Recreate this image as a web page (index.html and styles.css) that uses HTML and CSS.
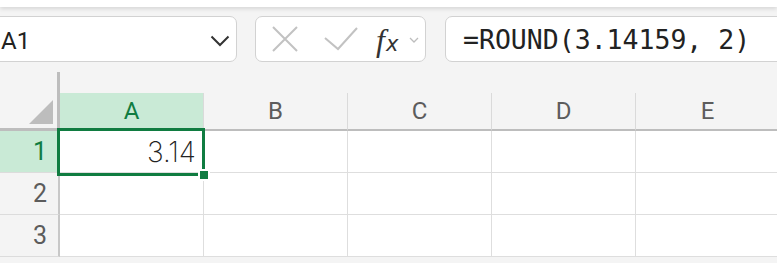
FILE: index.html
```html
<!DOCTYPE html>
<html lang="en">
<head>
    <meta charset="UTF-8">
    <title>Hoja de cálculo</title>
    <link rel="stylesheet" href="styles.css">
</head>
<body>
    <!-- Franja blanca superior -->
    <div class="topbar"></div>

    <!-- Barra de fórmulas -->
    <div class="toolbar">
        <div class="namebox">
            <span>A1</span>
            <svg class="chev" width="20" height="12" viewBox="0 0 20 12">
                <polyline points="1.5,1.5 10,10 18.5,1.5" fill="none" stroke="#333" stroke-width="2"/>
            </svg>
        </div>
        <div class="fxbox">
            <svg class="icon-x" width="26" height="26" viewBox="0 0 26 26">
                <path d="M1 1 L25 25 M25 1 L1 25" stroke="#c2c2c2" stroke-width="2" fill="none"/>
            </svg>
            <svg class="icon-ok" width="34" height="24" viewBox="0 0 34 24">
                <polyline points="1,11 14,22 33,1" fill="none" stroke="#c2c2c2" stroke-width="2"/>
            </svg>
            <span class="fx"><i>f</i><span class="fx-x">x</span></span>
            <svg class="chev-sm" width="10" height="6" viewBox="0 0 10 6">
                <polyline points="1,1 5,5 9,1" fill="none" stroke="#bdbdbd" stroke-width="1.3"/>
            </svg>
        </div>
        <div class="formula">=ROUND(3.14159, 2)</div>
    </div>

    <!-- Cuadrícula -->
    <div class="sheet">
        <div class="corner"><span class="tri"></span></div>
        <div class="colhead active">A</div>
        <div class="colhead">B</div>
        <div class="colhead">C</div>
        <div class="colhead">D</div>
        <div class="colhead">E</div>

        <div class="rowhead active">1</div>
        <div class="cell selected">3.14<span class="sel"><span class="handle"></span></span></div>
        <div class="cell"></div>
        <div class="cell"></div>
        <div class="cell"></div>
        <div class="cell"></div>

        <div class="rowhead">2</div>
        <div class="cell"></div>
        <div class="cell"></div>
        <div class="cell"></div>
        <div class="cell"></div>
        <div class="cell"></div>

        <div class="rowhead">3</div>
        <div class="cell"></div>
        <div class="cell"></div>
        <div class="cell"></div>
        <div class="cell"></div>
        <div class="cell"></div>
    </div>
</body>
</html>
```

FILE: styles.css
```css
* {
    box-sizing: border-box;
}

body {
    margin: 0;
    width: 777px;
    height: 263px;
    overflow: hidden;
    font-family: Roboto, "Noto Sans", sans-serif;
    background-color: #f4f4f4;
}

.topbar {
    height: 7px;
    background-color: #fff;
    box-shadow: 0px 2px 4px rgba(0, 0, 0, 0.12);
}

.toolbar {
    display: flex;
    margin-top: 9px;
    height: 46px;
}

.namebox,
.fxbox,
.formula {
    display: flex;
    flex-shrink: 0;
    align-items: center;
    background-color: #fff;
    border: 1.5px solid #d2d2d2;
    border-radius: 7px;
}

.namebox {
    width: 249px;
    margin-left: -12px;
    padding: 3px 0 0 12px;
    font-size: 24px;
    color: #222;
}

.namebox .chev {
    margin-left: auto;
    margin-right: 6px;
}

.fxbox {
    width: 171px;
    margin-left: 18px;
    padding-left: 16px;
}

.icon-ok {
    margin-left: 26px;
}

.fx {
    margin-left: 18px;
    margin-top: 2px;
    color: #333;
}

.fx i {
    font-family: "Liberation Serif", serif;
    font-size: 32px;
}

.fx-x {
    font-family: "DejaVu Sans", sans-serif;
    font-style: italic;
    font-size: 21px;
    margin-left: 1px;
}

.chev-sm {
    margin-left: 11px;
    margin-top: 2px;
}

.formula {
    width: 360px;
    margin-left: 19px;
    padding: 1px 0 0 17px;
    font-family: "DejaVu Sans Mono", monospace;
    font-size: 26.5px;
    color: #222;
}

.sheet {
    display: grid;
    grid-template-columns: 60px repeat(5, 144px);
    grid-template-rows: 59px repeat(3, 42px);
    margin-top: 10px;
}

.corner {
    position: relative;
    border-right: 3px solid #bdbdbd;
    border-bottom: 3px solid #bdbdbd;
}

.tri {
    position: absolute;
    right: 4px;
    bottom: 4px;
    width: 0;
    height: 0;
    border-left: 24px solid transparent;
    border-bottom: 24px solid #bdbdbd;
}

.colhead {
    align-self: end;
    height: 38px;
    display: flex;
    align-items: center;
    justify-content: center;
    font-size: 24px;
    color: #5c5c5c;
    border-right: 1px solid #dadada;
    border-bottom: 2px solid #bdbdbd;
}

.rowhead {
    display: flex;
    align-items: center;
    justify-content: flex-end;
    padding-right: 11px;
    font-size: 25px;
    color: #5c5c5c;
    border-right: 2px solid #c8c8c8;
    border-bottom: 1px solid #dcdcdc;
}

.colhead.active,
.rowhead.active {
    background-color: #c9ead6;
    color: #107c41;
}

.cell {
    position: relative;
    background-color: #fff;
    border-right: 1px solid #dedede;
    border-bottom: 1px solid #dedede;
}

.cell.selected {
    z-index: 2;
    display: flex;
    align-items: center;
    justify-content: flex-end;
    padding: 0 7px 0 0;
    font-family: Inter, sans-serif;
    font-weight: 200;
    font-size: 28px;
    color: #222;
}

.sel {
    position: absolute;
    top: -3px;
    left: -3px;
    right: -2px;
    bottom: -4px;
    border: 3px solid #107c41;
}

.handle {
    position: absolute;
    right: -6px;
    bottom: -6px;
    width: 8px;
    height: 8px;
    background-color: #107c41;
    box-shadow: 0 0 0 2px #fff;
}
```
